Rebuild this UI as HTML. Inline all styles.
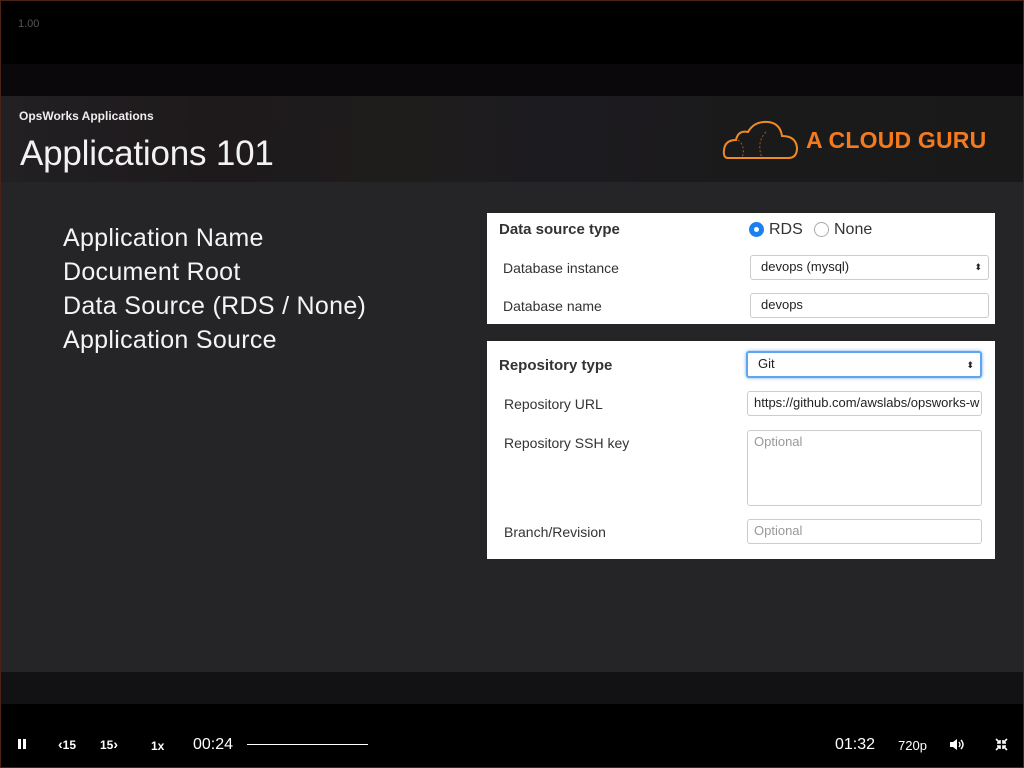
<!DOCTYPE html>
<html><head><style>
*{margin:0;padding:0;box-sizing:border-box}
body{width:1024px;height:768px;background:#000;position:relative;overflow:hidden;font-family:"Liberation Sans",sans-serif}
.abs{position:absolute}
.lbl{position:absolute;font-size:15px;color:#333}
.inp{position:absolute;border:1px solid #ccc;border-radius:3px;background:#fff;font-size:13px;color:#222;padding-left:10px;line-height:22px}
.ph{color:#999}
.ctl{position:absolute;color:#fff;font-weight:bold;font-size:12px}
</style></head><body>
<div class="abs" style="left:0;top:0;width:1024px;height:768px;border:1px solid #4a2218"></div>
<div class="abs" style="left:18px;top:18px;color:#555;font-size:11px">1.00</div>
<div class="abs" style="left:1px;top:64px;width:1022px;height:32px;background:#0a080b"></div>
<div class="abs" style="left:1px;top:96px;width:1022px;height:86px;background:linear-gradient(90deg,#222023 0%,#1e1a1c 20%,#1f1c1c 40%,#1c1b20 55%,#1b1a1b 70%,#1a1919 100%)"></div>
<div class="abs" style="left:19px;top:109px;color:#eee;font-size:12px;font-weight:bold">OpsWorks Applications</div>
<div class="abs" style="left:20px;top:134px;color:#f2f2f2;font-size:35px;letter-spacing:-0.2px">Applications 101</div>
<svg class="abs" style="left:722px;top:118px" width="78" height="44" viewBox="0 0 78 44"><path d="M6 40 Q1 40 2 32 Q3 22 14 22 Q16 12 26 14 Q32 3 46 4 Q58 5 60 18 Q74 18 75 30 Q75 40 66 40 Z" fill="none" stroke="#f08a24" stroke-width="2"/><path d="M16 22 q8 6 4 18 M44 14 q-10 10 -4 26" fill="none" stroke="#a05a20" stroke-width="1" stroke-dasharray="2 2"/></svg>
<div class="abs" style="left:806px;top:127px;color:#f47a20;font-size:23px;font-weight:bold;letter-spacing:0.2px">A CLOUD GURU</div>
<div class="abs" style="left:1px;top:182px;width:1022px;height:490px;background:#252427"></div>
<div class="abs" style="left:63px;top:221px;color:#f4f4f4;font-size:25px;line-height:34px;letter-spacing:0.3px">Application Name<br>Document Root<br>Data Source (RDS / None)<br>Application Source</div>
<div class="abs" style="left:487px;top:213px;width:508px;height:111px;background:#fff"></div>
<div class="lbl" style="left:499px;top:221px;font-weight:bold;color:#333">Data source type</div>
<div class="abs" style="left:749px;top:222px;width:15px;height:15px;border-radius:50%;background:#1a82f0;border:4px solid #1a82f0"><div style="width:5px;height:5px;background:#fff;border-radius:50%;margin:1px"></div></div>
<div class="lbl" style="left:769px;top:221px;font-size:16px">RDS</div>
<div class="abs" style="left:814px;top:222px;width:15px;height:15px;border-radius:50%;border:1px solid #aaa"></div>
<div class="lbl" style="left:834px;top:221px;font-size:16px">None</div>
<div class="lbl" style="left:503px;top:260px;font-size:14px">Database instance</div>
<div class="inp" style="left:750px;top:255px;width:239px;height:25px">devops (mysql)<span style="position:absolute;right:6px;top:0;font-size:9px">⬍</span></div>
<div class="lbl" style="left:503px;top:298px;font-size:14px">Database name</div>
<div class="inp" style="left:750px;top:293px;width:239px;height:25px">devops</div>
<div class="abs" style="left:487px;top:341px;width:508px;height:218px;background:#fff"></div>
<div class="lbl" style="left:499px;top:357px;font-weight:bold">Repository type</div>
<div class="inp" style="left:746px;top:351px;width:236px;height:27px;border:2px solid #5ea6ef;box-shadow:0 0 3px #6ab0f5">Git<span style="position:absolute;right:6px;top:1px;font-size:9px">⬍</span></div>
<div class="lbl" style="left:504px;top:396px;font-size:14px">Repository URL</div>
<div class="inp" style="left:747px;top:391px;width:235px;height:25px;padding-left:6px;overflow:hidden;white-space:nowrap">https://github.com/awslabs/opsworks-w</div>
<div class="lbl" style="left:504px;top:435px;font-size:14px">Repository SSH key</div>
<div class="inp ph" style="left:747px;top:430px;width:235px;height:76px;padding-left:6px">Optional</div>
<div class="lbl" style="left:504px;top:524px;font-size:14px">Branch/Revision</div>
<div class="inp ph" style="left:747px;top:519px;width:235px;height:25px;padding-left:6px">Optional</div>
<div class="abs" style="left:1px;top:672px;width:1022px;height:32px;background:#121214"></div>
<div class="abs" style="left:18px;top:739px;width:3px;height:10px;background:#fff"></div>
<div class="abs" style="left:23px;top:739px;width:3px;height:10px;background:#fff"></div>
<div class="ctl" style="left:58px;top:738px"><span style="font-size:14px;line-height:12px">‹</span>15</div>
<div class="ctl" style="left:100px;top:738px">15<span style="font-size:14px;line-height:12px">›</span></div>
<div class="ctl" style="left:151px;top:739px">1x</div>
<div class="abs" style="left:193px;top:736px;color:#fff;font-size:16px">00:24</div>
<div class="abs" style="left:247px;top:744px;width:121px;height:1px;background:#fff"></div>
<div class="abs" style="left:835px;top:736px;color:#fff;font-size:16px">01:32</div>
<div class="abs" style="left:898px;top:738px;color:#fff;font-size:13px">720p</div>
<svg class="abs" style="left:949px;top:738px" width="16" height="13" viewBox="0 0 16 13"><path d="M1 4h3l4-3v11l-4-3H1z" fill="#fff"/><path d="M10 4q2 2.5 0 5M12 2q4 4.5 0 9" stroke="#fff" stroke-width="1.4" fill="none"/></svg>
<svg class="abs" style="left:995px;top:738px" width="13" height="13" viewBox="0 0 13 13"><path d="M1 1l4 4M5 2v3H2M12 1L8 5M8 2v3h3M1 12l4-4M2 8h3v3M12 12L8 8M11 8H8v3" stroke="#fff" stroke-width="1.6" fill="none"/></svg>
</body></html>
